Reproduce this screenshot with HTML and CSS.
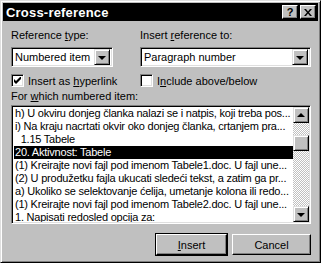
FILE: index.html
```html
<!DOCTYPE html>
<html lang="en">
<head>
    <meta charset="UTF-8">
    <title>Cross-reference</title>
    <link rel="stylesheet" href="styles.css">
</head>
<body>
    <div class="dialog">
        <div class="titlebar">
            <span class="title">Cross-reference</span>
            <span class="tbtn">?</span>
            <span class="tbtn close">
                <svg width="8" height="7" viewBox="0 0 8 7"><path d="M0 0h2l2 2.5L6 0h2L5 3.5 8 7H6L4 4.5 2 7H0l3-3.5z" fill="#000"/></svg>
            </span>
        </div>
        <div class="content">
            <div class="top-row">
                <div class="col col-left">
                    <div class="label">Reference <u>t</u>ype:</div>
                    <div class="combo">
                        <span class="combo-text">Numbered item</span>
                        <span class="arrow-btn"><span class="tri-down"></span></span>
                    </div>
                </div>
                <div class="col col-right">
                    <div class="label">Insert <u>r</u>eference to:</div>
                    <div class="combo">
                        <span class="combo-text">Paragraph number</span>
                        <span class="arrow-btn"><span class="tri-down"></span></span>
                    </div>
                </div>
            </div>
            <div class="check-row">
                <div class="col col-left check">
                    <span class="box">
                        <svg width="7" height="7" viewBox="0 0 7 7"><path d="M0 2v3l2 2 5-5V-1L2 4z" fill="#000"/></svg>
                    </span>
                    <span>Insert as <u>h</u>yperlink</span>
                </div>
                <div class="col col-right check">
                    <span class="box"></span>
                    <span>I<u>n</u>clude above/below</span>
                </div>
            </div>
            <div class="label">For <u>w</u>hich numbered item:</div>
            <div class="listbox">
                <div class="items">
                    <div class="item">h) U okviru donjeg članka nalazi se i natpis, koji treba pos...</div>
                    <div class="item">i) Na kraju nacrtati okvir oko donjeg članka, crtanjem pra...</div>
                    <div class="item">&nbsp;&nbsp;1.15 Tabele</div>
                    <div class="item selected">20. Aktivnost: Tabele</div>
                    <div class="item">(1) Kreirajte novi fajl pod imenom Tabele1.doc. U fajl une...</div>
                    <div class="item">(2) U produžetku fajla ukucati sledeći tekst, a zatim ga pr...</div>
                    <div class="item">a) Ukoliko se selektovanje ćelija, umetanje kolona ili redo...</div>
                    <div class="item">(1) Kreirajte novi fajl pod imenom Tabele2.doc. U fajl une...</div>
                    <div class="item">1. Napisati redosled opcija za:</div>
                </div>
                <div class="scrollbar">
                    <span class="arrow-btn sb"><span class="tri-up"></span></span>
                    <div class="track">
                        <span class="thumb"></span>
                    </div>
                    <span class="arrow-btn sb"><span class="tri-down"></span></span>
                </div>
            </div>
            <div class="buttons">
                <div class="default-wrap"><div class="button"><u>I</u>nsert</div></div>
                <div class="button">Cancel</div>
            </div>
        </div>
    </div>
</body>
</html>
```

FILE: styles.css
```css
body {
    margin: 0;
    font-family: 'Liberation Sans', Arial, sans-serif;
    font-size: 11px;
    color: #000;
    background: #c0c0c0;
}

u {
    text-decoration: underline;
    text-underline-offset: 1px;
}

.dialog {
    width: 321px;
    height: 263px;
    box-sizing: border-box;
    background: #c0c0c0;
    border-top: 1px solid #dfdfdf;
    border-left: 1px solid #dfdfdf;
    border-right: 1px solid #000;
    border-bottom: 1px solid #000;
    box-shadow: inset 1px 1px 0 #fff, inset -1px -1px 0 #808080;
    padding: 2px;
    overflow: hidden;
}

.titlebar {
    height: 18px;
    background: #000;
    display: flex;
    align-items: center;
    padding: 0 2px 0 3px;
}

.title {
    flex: 1;
    color: #fff;
    font-weight: bold;
    font-size: 13px;
    letter-spacing: 0.2px;
}

.tbtn {
    width: 16px;
    height: 14px;
    box-sizing: border-box;
    background: #c0c0c0;
    border-top: 1px solid #fff;
    border-left: 1px solid #fff;
    border-right: 1px solid #000;
    border-bottom: 1px solid #000;
    box-shadow: inset -1px -1px 0 #808080;
    display: flex;
    align-items: center;
    justify-content: center;
    font-weight: bold;
    font-size: 11px;
    line-height: 1;
}

.tbtn.close {
    margin-left: 2px;
}

.content {
    padding: 8px 7px 0 8px;
}

.top-row,
.check-row {
    display: flex;
}

.col-left {
    width: 102px;
}

.col-right {
    width: 171px;
    margin-left: 27px;
}

.label {
    line-height: 13px;
    height: 13px;
    margin-bottom: 5px;
    white-space: nowrap;
}

.combo {
    height: 20px;
    box-sizing: border-box;
    background: #fff;
    border-top: 1px solid #808080;
    border-left: 1px solid #808080;
    border-right: 1px solid #fff;
    border-bottom: 1px solid #fff;
    box-shadow: inset 1px 1px 0 #000, inset -1px -1px 0 #dfdfdf;
    display: flex;
    align-items: center;
    padding: 2px;
}

.combo-text {
    flex: 1;
    padding-left: 1px;
    line-height: 14px;
    white-space: nowrap;
}

.arrow-btn {
    width: 16px;
    height: 16px;
    box-sizing: border-box;
    background: #c0c0c0;
    border-top: 1px solid #dfdfdf;
    border-left: 1px solid #dfdfdf;
    border-right: 1px solid #000;
    border-bottom: 1px solid #000;
    box-shadow: inset 1px 1px 0 #fff, inset -1px -1px 0 #808080;
    display: flex;
    align-items: center;
    justify-content: center;
}

.tri-down {
    width: 0;
    height: 0;
    border-left: 4px solid transparent;
    border-right: 4px solid transparent;
    border-top: 4px solid #000;
    margin-top: 1px;
}

.tri-up {
    width: 0;
    height: 0;
    border-left: 4px solid transparent;
    border-right: 4px solid transparent;
    border-bottom: 4px solid #000;
    margin-top: -1px;
}

.check-row {
    margin-top: 7px;
    margin-bottom: 3px;
}

.check {
    display: flex;
    align-items: center;
    height: 13px;
    white-space: nowrap;
}

.box {
    flex: none;
    width: 13px;
    height: 13px;
    box-sizing: border-box;
    background: #fff;
    border-top: 1px solid #808080;
    border-left: 1px solid #808080;
    border-right: 1px solid #fff;
    border-bottom: 1px solid #fff;
    box-shadow: inset 1px 1px 0 #000, inset -1px -1px 0 #dfdfdf;
    margin-right: 4px;
    display: flex;
    align-items: center;
    justify-content: center;
}

.listbox {
    height: 119px;
    box-sizing: border-box;
    background: #fff;
    border-top: 1px solid #808080;
    border-left: 1px solid #808080;
    border-right: 1px solid #fff;
    border-bottom: 1px solid #fff;
    box-shadow: inset 1px 1px 0 #000, inset -1px -1px 0 #dfdfdf;
    padding: 1px;
    display: flex;
    margin-top: -3px;
}

.items {
    flex: 1;
    overflow: hidden;
    padding-left: 1px;
}

.item {
    height: 13px;
    line-height: 13px;
    white-space: nowrap;
    overflow: hidden;
    padding-left: 1px;
    letter-spacing: -0.22px;
}

.item.selected {
    background: #000;
    color: #fff;
}

.scrollbar {
    width: 16px;
    display: flex;
    flex-direction: column;
}

.track {
    flex: 1;
    background: repeating-conic-gradient(#c0c0c0 0 25%, #fff 0 50%) 0 0 / 2px 2px;
    padding-top: 12px;
}

.thumb {
    display: block;
    width: 16px;
    height: 16px;
    box-sizing: border-box;
    background: #c0c0c0;
    border-top: 1px solid #dfdfdf;
    border-left: 1px solid #dfdfdf;
    border-right: 1px solid #000;
    border-bottom: 1px solid #000;
    box-shadow: inset 1px 1px 0 #fff, inset -1px -1px 0 #808080;
}

.buttons {
    display: flex;
    justify-content: flex-end;
    align-items: center;
    margin-top: 9px;
    gap: 4px;
}

.default-wrap {
    border: 1px solid #000;
}

.button {
    width: 71px;
    height: 21px;
    box-sizing: border-box;
    background: #c0c0c0;
    border-top: 1px solid #fff;
    border-left: 1px solid #fff;
    border-right: 1px solid #000;
    border-bottom: 1px solid #000;
    box-shadow: inset -1px -1px 0 #808080;
    display: flex;
    align-items: center;
    justify-content: center;
}

.buttons > .button {
    width: 79px;
}
```
